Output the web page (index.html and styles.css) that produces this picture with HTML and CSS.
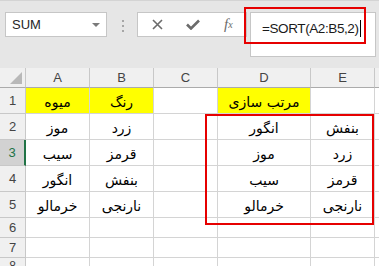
FILE: index.html
```html
<!DOCTYPE html>
<html lang="fa">

<head>
    <meta charset="UTF-8">
    <title>SORT</title>
    <link rel="stylesheet" href="styles.css">
</head>

<body>
    <div class="toolbar">
        <div class="name-box">SUM<span class="caret"></span></div>
        <div class="grip"><i></i><i></i><i></i></div>
        <div class="fx-buttons">
            <svg class="icon" width="11" height="11" viewBox="0 0 11 11">
                <path d="M1 1 L10 10 M10 1 L1 10" stroke="#6b6b6b" stroke-width="1.6" fill="none" />
            </svg>
            <svg class="icon" width="14" height="11" viewBox="0 0 14 11">
                <path d="M1 5.5 L5 9.5 L13 1.5" stroke="#6b6b6b" stroke-width="2.6" fill="none" />
            </svg>
            <span class="fx">f<sub>x</sub></span>
        </div>
        <div class="formula">=SORT(A2:B5,2)<span class="cursor"></span></div>
        <div class="mark mark-formula"></div>
    </div>

    <div class="sheet">
        <div class="corner"><span class="tri"></span></div>
        <div class="col-head">A</div>
        <div class="col-head">B</div>
        <div class="col-head">C</div>
        <div class="col-head">D</div>
        <div class="col-head">E</div>
        <div class="col-head rest"></div>

        <div class="row-head">1</div>
        <div class="cell hl">میوه</div>
        <div class="cell hl">رنگ</div>
        <div class="cell"></div>
        <div class="cell hl">مرتب سازی</div>
        <div class="cell"></div>
        <div class="cell rest"></div>

        <div class="row-head">2</div>
        <div class="cell">موز</div>
        <div class="cell">زرد</div>
        <div class="cell"></div>
        <div class="cell">انگور</div>
        <div class="cell">بنفش</div>
        <div class="cell rest"></div>

        <div class="row-head active">3</div>
        <div class="cell">سیب</div>
        <div class="cell">قرمز</div>
        <div class="cell"></div>
        <div class="cell">موز</div>
        <div class="cell">زرد</div>
        <div class="cell rest"></div>

        <div class="row-head">4</div>
        <div class="cell">انگور</div>
        <div class="cell">بنفش</div>
        <div class="cell"></div>
        <div class="cell">سیب</div>
        <div class="cell">قرمز</div>
        <div class="cell rest"></div>

        <div class="row-head">5</div>
        <div class="cell">خرمالو</div>
        <div class="cell">نارنجی</div>
        <div class="cell"></div>
        <div class="cell">خرمالو</div>
        <div class="cell">نارنجی</div>
        <div class="cell rest"></div>

        <div class="row-head">6</div>
        <div class="cell"></div>
        <div class="cell"></div>
        <div class="cell"></div>
        <div class="cell"></div>
        <div class="cell"></div>
        <div class="cell rest"></div>

        <div class="row-head">7</div>
        <div class="cell"></div>
        <div class="cell"></div>
        <div class="cell"></div>
        <div class="cell"></div>
        <div class="cell"></div>
        <div class="cell rest"></div>

        <div class="row-head last">8</div>
        <div class="cell"></div>
        <div class="cell"></div>
        <div class="cell"></div>
        <div class="cell"></div>
        <div class="cell"></div>
        <div class="cell rest"></div>

        <div class="mark mark-range"></div>
    </div>
</body>

</html>
```

FILE: styles.css
```css
body {
    margin: 0;
    width: 379px;
    height: 266px;
    overflow: hidden;
    background-color: #ffffff;
    font-family: "Liberation Sans", Arial, sans-serif;
}

/* formula bar */
.toolbar {
    position: relative;
    height: 68px;
    box-sizing: border-box;
    display: flex;
    align-items: flex-start;
    padding: 11px 0 0 5px;
    background-color: #e6e6e6;
    border-top: 1px solid #d4d4d4;
}

.name-box {
    width: 102px;
    height: 25px;
    box-sizing: border-box;
    display: flex;
    align-items: center;
    padding-left: 6px;
    background-color: #ffffff;
    border: 1px solid #c6c6c6;
    font-size: 13px;
    color: #262626;
}

.caret {
    margin-left: auto;
    margin-right: 6px;
    border-left: 4px solid transparent;
    border-right: 4px solid transparent;
    border-top: 4px solid #7a7a7a;
}

.grip {
    display: flex;
    flex-direction: column;
    gap: 3px;
    margin: 8px 0 0 15px;
}

.grip i {
    width: 2px;
    height: 2px;
    background-color: #a6a6a6;
}

.fx-buttons {
    width: 110px;
    height: 25px;
    box-sizing: border-box;
    margin-left: 13px;
    display: flex;
    align-items: center;
    gap: 23px;
    padding-left: 14px;
    background-color: #ffffff;
    border: 1px solid #c6c6c6;
}

.fx {
    font-family: "Liberation Serif", serif;
    font-style: italic;
    font-size: 15px;
    color: #6b6b6b;
    margin-left: 1px;
}

.fx sub {
    font-size: 10px;
    vertical-align: 1px;
}

.formula {
    width: 126px;
    height: 45px;
    box-sizing: border-box;
    margin-left: 3px;
    padding: 7px 0 0 11px;
    background-color: #ffffff;
    border: 1px solid #c6c6c6;
    font-size: 13.5px;
    letter-spacing: -0.4px;
    color: #1a1a1a;
    white-space: nowrap;
}

.cursor {
    display: inline-block;
    width: 1px;
    height: 17px;
    margin-left: 1px;
    vertical-align: -4px;
    background-color: #000000;
}

/* red call-outs */
.mark {
    position: absolute;
    box-sizing: border-box;
    border: 2px solid #e60000;
}

.mark-formula {
    left: 244px;
    top: 6px;
    width: 122px;
    height: 37px;
}

.mark-range {
    left: 205px;
    top: 46px;
    width: 169px;
    height: 111px;
}

/* grid */
.sheet {
    position: relative;
    display: grid;
    grid-template-columns: 26px 64px 64px 64px 93px 64px 1fr;
    grid-template-rows: 20px repeat(5, 26px) 20px 20px 20px;
}

.sheet > div {
    box-sizing: border-box;
    display: flex;
    align-items: center;
    justify-content: center;
}

.corner,
.col-head,
.row-head {
    background-color: #f0f0f0;
    color: #444444;
    font-size: 13px;
    border-right: 1px solid #c8c8c8;
    border-bottom: 1px solid #c8c8c8;
}

.row-head.last {
    align-items: flex-start;
    padding-top: 1px;
    font-size: 12px;
}

.col-head {
    border-bottom-color: #ababab;
}

.col-head.rest {
    border-right: none;
}

.corner {
    position: relative;
    border-bottom-color: #ababab;
}

.tri {
    position: absolute;
    right: 3px;
    bottom: 3px;
    border-left: 12px solid transparent;
    border-bottom: 12px solid #b8b8b8;
}

.row-head.active {
    background-color: #d2d2d2;
    color: #217346;
    border-right: 2px solid #217346;
}

.cell {
    padding-top: 2px;
    border-right: 1px solid #d4d4d4;
    border-bottom: 1px solid #d4d4d4;
    font-family: "DejaVu Sans", sans-serif;
    font-size: 14px;
    color: #000000;
    direction: rtl;
}

.cell.rest {
    border-right: none;
}

.hl {
    background-color: #ffff00;
}
```
